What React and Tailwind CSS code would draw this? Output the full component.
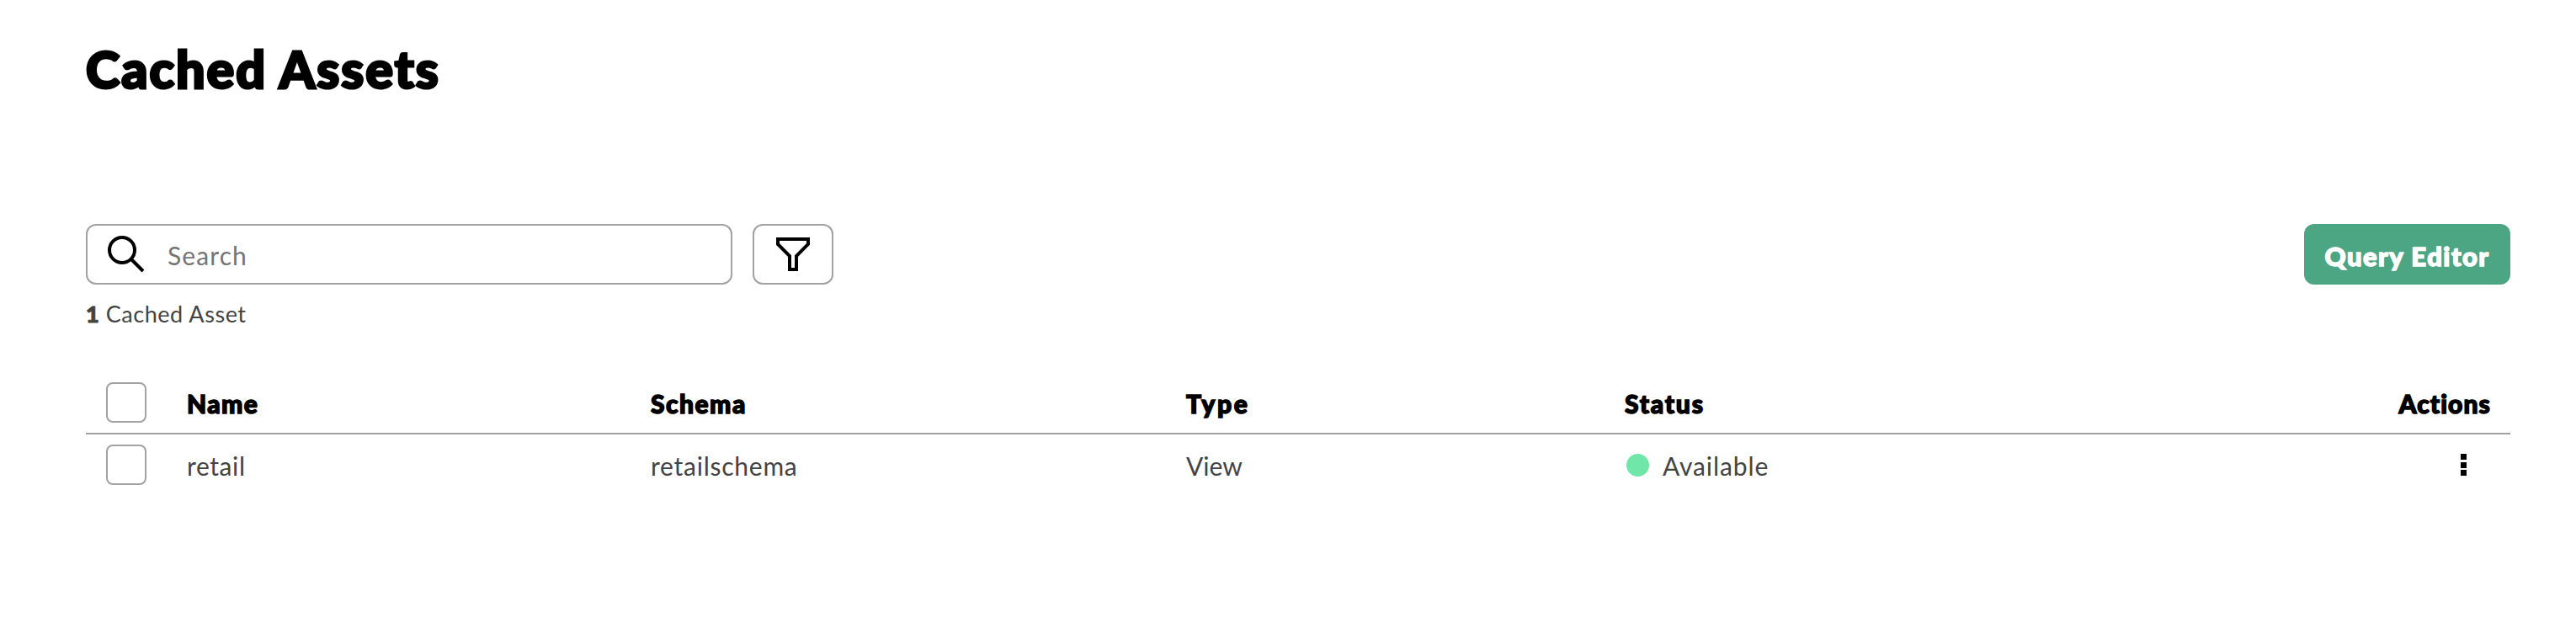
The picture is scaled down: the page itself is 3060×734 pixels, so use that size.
const columns =
  'grid grid-cols-[120px_551px_636px_521px_1fr] items-center';

function Checkbox({ label }) {
  return (
    <button
      role="checkbox"
      aria-checked="false"
      aria-label={label}
      className="ml-6 block size-12 rounded-[8px] border-2 border-[#a2a2a2] bg-white"
    />
  );
}

export default function App() {
  return (
    <main className="h-[734px] w-[3060px] bg-white pl-[102px] pr-[78px] font-['Lato',sans-serif] text-[30px] leading-9 text-[#444444]">
      <h1 className="h-[266px] pt-[42px] text-[61px] leading-[80px] font-black tracking-[2px] text-black [-webkit-text-stroke:3px_black]">
        <span>Cached Assets</span>
      </h1>

      <div className="flex h-[72px] items-center gap-6">
        <div className="flex h-full w-[768px] items-center rounded-[12px] border-2 border-[#a2a2a2] pl-[22px]">
          <svg viewBox="0 0 24 24" className="size-12 fill-none stroke-black stroke-2">
            <path d="M15 15l7 7" />
            <circle cx="9.5" cy="9.5" r="7.5" />
          </svg>
          <span className="ml-[25px] pt-[1px] tracking-[1.1px] text-[#757575]">Search</span>
        </div>
        <button
          aria-label="Filter"
          className="flex h-full w-24 items-center justify-center rounded-[12px] border-2 border-[#a2a2a2]"
        >
          <svg viewBox="0 0 24 24" className="size-12 fill-none stroke-black stroke-2">
            <path d="M3 6l7 7v8h4v-8l7-7V3H3z" />
          </svg>
        </button>
        <button className="ml-auto flex h-full w-[245px] items-center justify-center rounded-[12px] bg-[#4ca583] pt-[3px] text-[31px] font-black tracking-[1.5px] text-white [-webkit-text-stroke:1.5px_white]">
          <span>Query Editor</span>
        </button>
      </div>

      <p className="h-[104px] pt-[17px] text-[27px] tracking-[0.55px]">
        <b className="font-black [-webkit-text-stroke:1px_#444444]">1</b> <span>Cached Asset</span>
      </p>

      <section>
        <div className={`${columns} h-[74px] border-b-2 border-[#a2a2a2] font-black text-black [-webkit-text-stroke:1.5px_black]`}>
          <Checkbox label="Select all" />
          <span className="pt-[2px] tracking-[1.4px]">Name</span>
          <span className="pt-[2px] tracking-[1.5px]">Schema</span>
          <span className="pt-[2px] tracking-[2.7px]">Type</span>
          <span className="flex justify-between pt-[2px] pr-[23px]">
            <span className="tracking-[1.8px]">Status</span>
            <span className="tracking-[1.1px]">Actions</span>
          </span>
        </div>
        <div className={`${columns} h-[72px]`}>
          <Checkbox label="Select retail" />
          <span className="pt-[2px] tracking-[0.6px]">retail</span>
          <span className="pt-[2px] tracking-[0.75px]">retailschema</span>
          <span className="pt-[2px]">View</span>
          <span className="flex items-center justify-between pr-[52px]">
            <span className="flex items-center gap-4">
              <i className="ml-[2px] size-[27px] rounded-full bg-[#70e6a9]" />
              <span className="pt-[2px] tracking-[0.9px]">Available</span>
            </span>
            <button aria-label="Actions menu" className="flex flex-col gap-[2.5px]">
              <i className="size-[7px] bg-black" />
              <i className="size-[7px] bg-black" />
              <i className="size-[7px] bg-black" />
            </button>
          </span>
        </div>
      </section>
    </main>
  );
}
